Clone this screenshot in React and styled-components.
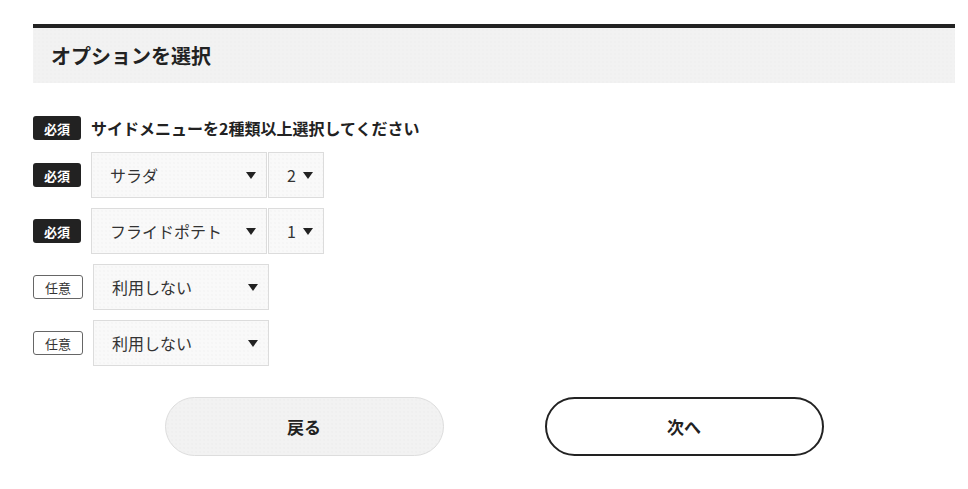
import React from "react";
import styled, { createGlobalStyle } from "styled-components";

const Global = createGlobalStyle`
  html, body { margin: 0; padding: 0; background: #fff; }
  body {
    font-family: "Noto Sans CJK JP", "Noto Sans", sans-serif;
    color: #222;
  }
`;

const Page = styled.div`
  width: 922px;
  padding: 24px 13px 0 33px;
`;

const Heading = styled.h2`
  margin: 0;
  height: 55px;
  display: flex;
  align-items: center;
  padding-left: 18px;
  border-top: 4px solid #222;
  background-color: #f2f2f2;
  background-image: radial-gradient(#ededed 0.6px, transparent 0.8px);
  background-size: 4px 4px;
  font-size: 20px;
  font-weight: 700;
  color: #222;
  line-height: 1;
`;

const Form = styled.div`
  display: flex;
  flex-direction: column;
  gap: 10px;
  margin-top: 33px;
`;

const Question = styled.div`
  display: flex;
  align-items: center;
  gap: 10px;
  margin-bottom: 2px;
`;

const QuestionText = styled.span`
  font-size: 16px;
  font-weight: 700;
  color: #222;
  line-height: 24px;
`;

const Badge = styled.span`
  box-sizing: border-box;
  display: inline-flex;
  align-items: center;
  justify-content: center;
  flex: none;
  width: ${(p) => (p.$required ? "48px" : "50px")};
  height: 24px;
  border-radius: 3px;
  font-size: 13px;
  line-height: 1;
  font-weight: ${(p) => (p.$required ? 700 : 400)};
  background: ${(p) => (p.$required ? "#222" : "#fff")};
  color: ${(p) => (p.$required ? "#fff" : "#333")};
  border: ${(p) => (p.$required ? "none" : "1px solid #666")};
`;

const Row = styled.div`
  display: flex;
  align-items: center;
  gap: 10px;
`;

const Selects = styled.div`
  display: flex;
  gap: 1px;
`;

const Select = styled.div`
  box-sizing: border-box;
  display: flex;
  align-items: center;
  justify-content: space-between;
  width: ${(p) => p.$w}px;
  height: 46px;
  padding: 0 10px 0 ${(p) => p.$pl}px;
  border: 1px solid #dcdcdc;
  background-color: #f9f9f9;
  background-image: radial-gradient(#f0f0f0 0.6px, transparent 0.8px);
  background-size: 4px 4px;
  font-size: 16px;
  color: #333;
`;

const Caret = styled.span`
  width: 0;
  height: 0;
  border-left: 5px solid transparent;
  border-right: 5px solid transparent;
  border-top: 7px solid #222;
  margin-top: 1px;
`;

const Buttons = styled.div`
  display: flex;
  justify-content: center;
  gap: 101px;
  margin-top: 31px;
`;

const Button = styled.button`
  box-sizing: border-box;
  width: 279px;
  height: 59px;
  border-radius: 30px;
  font-family: inherit;
  font-size: 17px;
  font-weight: 700;
  color: #222;
  cursor: pointer;
  background-color: ${(p) => (p.$primary ? "#fff" : "#f2f2f2")};
  background-image: ${(p) =>
    p.$primary ? "none" : "radial-gradient(#ebebeb 0.6px, transparent 0.8px)"};
  background-size: 4px 4px;
  border: ${(p) => (p.$primary ? "2px solid #222" : "1px solid #ddd")};
`;

const rows = [
  { required: true, item: "サラダ", qty: "2" },
  { required: true, item: "フライドポテト", qty: "1" },
  { required: false, item: "利用しない" },
  { required: false, item: "利用しない" },
];

export default function App() {
  return (
    <>
      <Global />
      <Page>
        <Heading>オプションを選択</Heading>
        <Form>
          <Question>
            <Badge $required>必須</Badge>
            <QuestionText>サイドメニューを2種類以上選択してください</QuestionText>
          </Question>
          {rows.map((r, i) => (
            <Row key={i}>
              <Badge $required={r.required}>{r.required ? "必須" : "任意"}</Badge>
              <Selects>
                <Select $w={176} $pl={18}>
                  <span>{r.item}</span>
                  <Caret />
                </Select>
                {r.qty && (
                  <Select $w={56} $pl={18}>
                    <span>{r.qty}</span>
                    <Caret />
                  </Select>
                )}
              </Selects>
            </Row>
          ))}
        </Form>
        <Buttons>
          <Button>戻る</Button>
          <Button $primary>次へ</Button>
        </Buttons>
      </Page>
    </>
  );
}
